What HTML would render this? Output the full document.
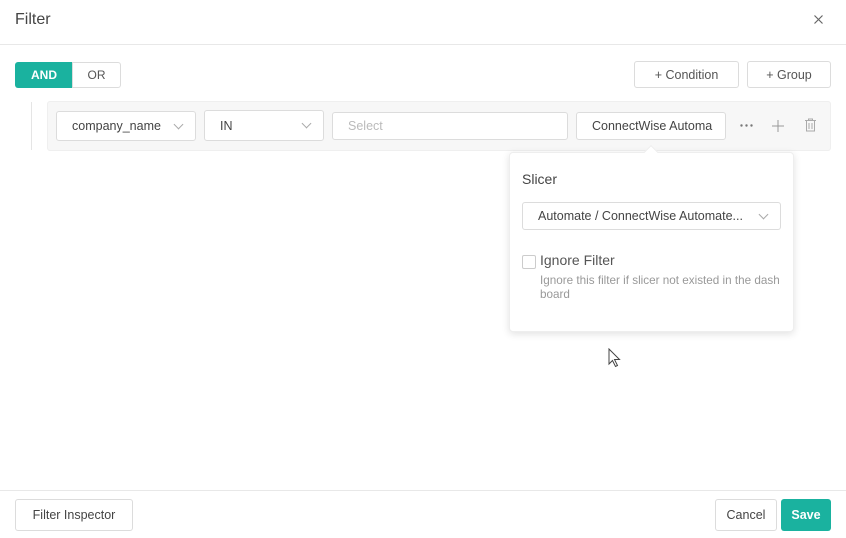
<!DOCTYPE html>
<html><head><style>
*{box-sizing:border-box;margin:0;padding:0}
body{width:846px;height:538px;background:#fff;font-family:"Liberation Sans",sans-serif;position:relative;overflow:hidden;color:#333}
.abs{position:absolute}
.box{position:absolute;border:1px solid #dcdcdc;border-radius:3px;background:#fff;font-size:12.5px;color:#444;display:flex;align-items:center}
.chev{position:absolute;width:7px;height:7px;border-right:1px solid #aaa;border-bottom:1px solid #aaa;transform:rotate(45deg)}
</style></head><body>
<div class="abs" style="left:15px;top:11px;font-size:16px;color:#444">Filter</div>
<svg class="abs" style="left:814px;top:15px" width="9" height="9" viewBox="0 0 9 9" stroke="#666" stroke-width="1.2"><path d="M0.5 0.5l8 8M8.5 0.5l-8 8"/></svg>
<div class="abs" style="left:0;top:44px;width:846px;height:1px;background:#e8e8e8"></div>

<div class="abs" style="left:15px;top:62px;width:58px;height:26px;background:#1ab29f;border-radius:3px 0 0 3px;color:#fff;font-size:12px;font-weight:bold;display:flex;align-items:center;justify-content:center">AND</div>
<div class="box" style="left:72px;top:62px;width:49px;height:26px;border-radius:0 3px 3px 0;justify-content:center;font-size:12px;color:#555">OR</div>

<div class="box" style="left:634px;top:61px;width:105px;height:27px;justify-content:center;color:#555">+ Condition</div>
<div class="box" style="left:747px;top:61px;width:84px;height:27px;justify-content:center;color:#555">+ Group</div>

<div class="abs" style="left:31px;top:102px;width:1px;height:48px;background:#e5e5e5"></div>
<div class="abs" style="left:47px;top:101px;width:784px;height:50px;background:#f7f7f7;border:1px solid #efefef;border-radius:3px"></div>
<div class="box" style="left:56px;top:111px;width:140px;height:30px;padding-left:15px">company_name<span class="chev" style="left:118px;top:9px"></span></div>
<div class="box" style="left:204px;top:110px;width:120px;height:31px;padding-left:15px">IN<span class="chev" style="left:98px;top:9px"></span></div>
<div class="box" style="left:332px;top:112px;width:236px;height:28px;padding-left:15px;color:#bbb">Select</div>
<div class="box" style="left:576px;top:112px;width:150px;height:28px;padding-left:15px;overflow:hidden;white-space:nowrap">ConnectWise Automa</div>
<svg class="abs" style="left:740px;top:124px" width="13" height="3"><circle cx="1.5" cy="1.5" r="1.2" fill="#777"/><circle cx="6.5" cy="1.5" r="1.2" fill="#777"/><circle cx="11.5" cy="1.5" r="1.2" fill="#777"/></svg>
<svg class="abs" style="left:772px;top:120px" width="12" height="12" stroke="#999"><path d="M6 0v12M0 6h12"/></svg>
<svg class="abs" style="left:804px;top:118px" width="13" height="14" viewBox="0 0 13 14" fill="none" stroke="#aaa"><path d="M1 2.5h11M4.5 2.5V1h4v1.5M2.5 2.5v10.5h8V2.5M5 5v6M8 5v6"/></svg>

<div class="abs" style="left:509px;top:152px;width:285px;height:180px;background:#fff;border:1px solid #eee;border-radius:4px;box-shadow:0 2px 8px rgba(0,0,0,.12)"></div>
<div class="abs" style="left:646px;top:147px;width:10px;height:10px;background:#fff;transform:rotate(45deg);border-left:1px solid #eee;border-top:1px solid #eee"></div>
<div class="abs" style="left:522px;top:171px;font-size:14px;color:#444">Slicer</div>
<div class="box" style="left:522px;top:202px;width:259px;height:28px;padding-left:15px;font-size:12.5px;white-space:nowrap">Automate / ConnectWise Automate...<span class="chev" style="left:237px;top:8px"></span></div>
<div class="abs" style="left:522px;top:255px;width:14px;height:14px;border:1px solid #ccc;border-radius:2px"></div>
<div class="abs" style="left:540px;top:252px;font-size:14px;color:#555">Ignore Filter</div>
<div class="abs" style="left:540px;top:274px;width:243px;font-size:11.7px;color:#999;line-height:14px;word-break:break-all">Ignore this filter if slicer not existed in the dashboard</div>
<svg class="abs" style="left:608px;top:348px" width="13" height="20" viewBox="0 0 13 20"><path d="M1 1v15l3.5-3.5 3 6 2-1-3-6h5z" fill="#fff" stroke="#444"/></svg>

<div class="abs" style="left:0;top:490px;width:846px;height:1px;background:#e8e8e8"></div>
<div class="box" style="left:15px;top:499px;width:118px;height:32px;justify-content:center">Filter Inspector</div>
<div class="box" style="left:715px;top:499px;width:62px;height:32px;justify-content:center">Cancel</div>
<div class="abs" style="left:781px;top:499px;width:50px;height:32px;background:#1ab29f;border-radius:3px;color:#fff;font-size:12.5px;font-weight:bold;display:flex;align-items:center;justify-content:center">Save</div>
</body></html>
